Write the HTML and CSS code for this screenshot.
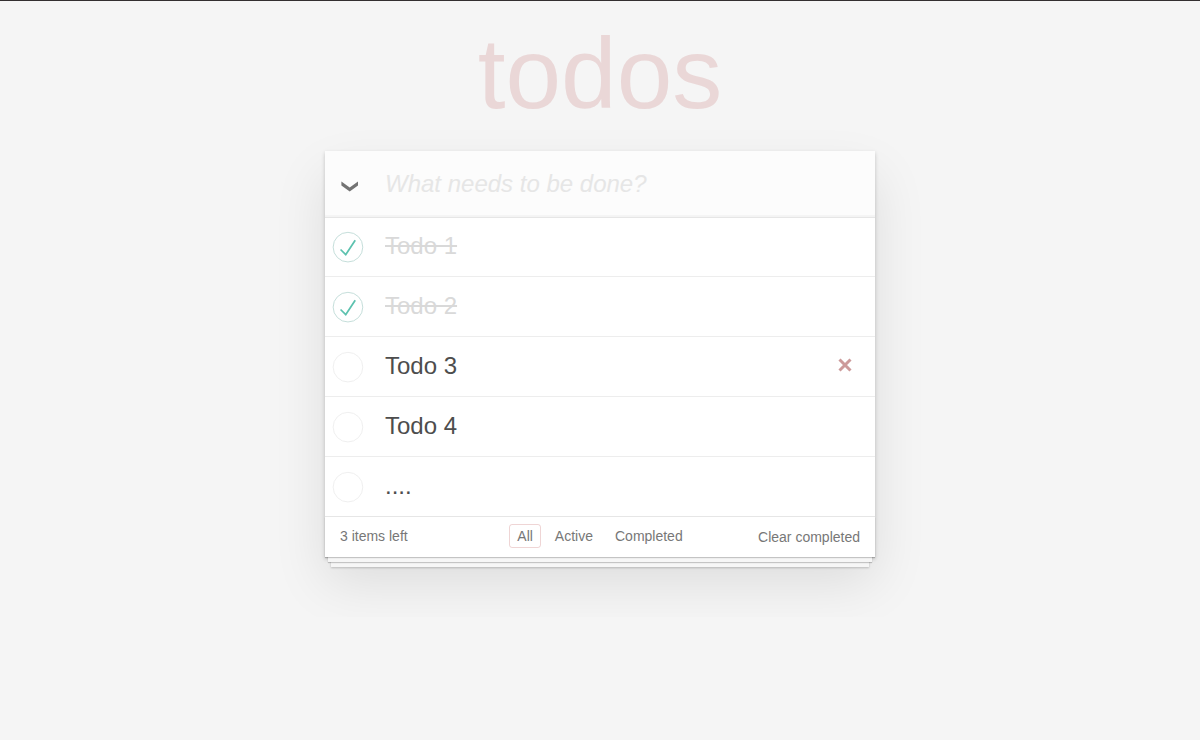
FILE: index.html
```html
<!DOCTYPE html>
<html lang="en">
<head>
<meta charset="utf-8">
<title>todos</title>
<link rel="stylesheet" href="styles.css">
</head>
<body>
<svg class="symbols" aria-hidden="true">
  <symbol id="ring" viewBox="-10 -18 100 135" overflow="visible">
    <circle cx="50" cy="50" r="50" fill="none" stroke="#ededed" stroke-width="3"/>
  </symbol>
  <symbol id="ring-done" viewBox="-10 -18 100 135" overflow="visible">
    <circle cx="50" cy="50" r="50" fill="none" stroke="#bddad5" stroke-width="3"/>
    <path fill="#5dc2af" d="M72 25L42 71 27 56l-4 4 20 20 34-52z"/>
  </symbol>
</svg>
<main class="todoapp">
  <h1 class="title">todos</h1>
  <section class="card">
    <header class="header">
      <button class="toggle-all" type="button" aria-label="Mark all as complete">
        <svg class="chevron" width="18" height="11" viewBox="0 0 18 11" aria-hidden="true"><path fill="#737373" d="M.4 .6 8.7 6.6 17 .6V4.4L8.7 10.6 .4 4.4z"/></svg>
      </button>
      <input class="new-todo" type="text" placeholder="What needs to be done?" aria-label="New todo">
    </header>
    <ul class="todo-list">
      <li class="todo done">
        <span class="check"><input class="toggle" type="checkbox" id="t1" checked><svg class="mark"><use href="#ring-done"/></svg></span>
        <label class="text" for="t1">Todo 1</label>
      </li>
      <li class="todo done">
        <span class="check"><input class="toggle" type="checkbox" id="t2" checked><svg class="mark"><use href="#ring-done"/></svg></span>
        <label class="text" for="t2">Todo 2</label>
      </li>
      <li class="todo">
        <span class="check"><input class="toggle" type="checkbox" id="t3"><svg class="mark"><use href="#ring"/></svg></span>
        <label class="text" for="t3">Todo 3</label>
        <button class="destroy" type="button" aria-label="Delete Todo 3">
          <svg class="cross" width="14" height="14" viewBox="0 0 14 14" aria-hidden="true"><path fill="none" stroke="#cc9a9a" stroke-width="3" d="M1.5 1.5 12.5 12.5M12.5 1.5 1.5 12.5"/></svg>
        </button>
      </li>
      <li class="todo">
        <span class="check"><input class="toggle" type="checkbox" id="t4"><svg class="mark"><use href="#ring"/></svg></span>
        <label class="text" for="t4">Todo 4</label>
      </li>
      <li class="todo">
        <span class="check"><input class="toggle" type="checkbox" id="t5"><svg class="mark"><use href="#ring"/></svg></span>
        <label class="text" for="t5">....</label>
      </li>
    </ul>
    <footer class="footer">
      <span class="count">3 items left</span>
      <nav class="filters">
        <a class="filter selected" href="#/">All</a>
        <a class="filter" href="#/active">Active</a>
        <a class="filter" href="#/completed">Completed</a>
      </nav>
      <button class="clear" type="button">Clear completed</button>
    </footer>
  </section>
</main>
</body>
</html>
```
FILE: styles.css
```css
* {
  box-sizing: border-box;
}

html {
  min-height: 100%;
  background: #f5f5f5;
  border-top: 1px solid #332f30;
}

body {
  margin: 0;
  font: 14px/20px "Liberation Sans", Arial, sans-serif;
  color: #4d4d4d;
}

button {
  padding: 0;
  border: 0;
  background: none;
  font: inherit;
  color: inherit;
  cursor: pointer;
}

.symbols {
  position: absolute;
  width: 0;
  height: 0;
}

.todoapp {
  max-width: 550px;
  margin: 0 auto;
  padding-bottom: 60px;
}

.title {
  margin: 0;
  padding: 16px 0 22px;
  font-size: 100px;
  line-height: 112px;
  font-weight: 400;
  text-align: center;
  color: rgba(175, 47, 47, 0.15);
}

.card {
  background: #fff;
  box-shadow: 0 2px 4px rgba(0, 0, 0, 0.2), 0 25px 50px rgba(0, 0, 0, 0.1);
}

.header {
  display: grid;
  grid-template-columns: 60px 1fr;
  height: 66px;
  background: #fcfcfc;
  box-shadow: inset 0 -2px 1px rgba(0, 0, 0, 0.03);
}

.toggle-all {
  display: flex;
  align-items: center;
  padding: 4px 0 0 16px;
}

.new-todo {
  width: 100%;
  border: 0;
  outline: 0;
  padding: 0;
  background: none;
  font-family: inherit;
  font-size: 24px;
  color: #4d4d4d;
}

.new-todo::placeholder {
  font-style: italic;
  color: #e6e6e6;
  opacity: 1;
}

.todo-list {
  margin: 0;
  padding: 0;
  list-style: none;
  box-shadow: inset 0 1px #e6e6e6;
}

.todo {
  display: grid;
  grid-template-columns: 60px 1fr 60px;
  align-items: center;
  border-bottom: 1px solid #ededed;
  font-size: 24px;
  line-height: 29px;
}

.todo:last-child {
  border-bottom-color: #e6e6e6;
}

.check {
  position: relative;
  width: 40px;
  height: 40px;
}

.toggle {
  appearance: none;
  display: block;
  width: 40px;
  height: 40px;
  margin: 0;
}

.mark {
  position: absolute;
  inset: 0;
  width: 40px;
  height: 40px;
  pointer-events: none;
}

.text {
  padding: 14px 0 16px;
}

.done .text {
  color: #d9d9d9;
  text-decoration: line-through;
}

.destroy {
  display: grid;
  place-items: center;
  height: 40px;
  padding-bottom: 4px;
}

.footer {
  position: relative;
  display: grid;
  grid-template-columns: 1fr auto 1fr;
  align-items: center;
  padding: 7px 15px 9px;
  color: #777;
}

.footer::before {
  content: "";
  position: absolute;
  inset: auto 0 0;
  height: 40px;
  pointer-events: none;
  box-shadow: 0 1px 1px rgba(0, 0, 0, 0.2), 0 8px 0 -3px #f6f6f6,
    0 9px 1px -3px rgba(0, 0, 0, 0.2), 0 16px 0 -6px #f6f6f6,
    0 17px 2px -6px rgba(0, 0, 0, 0.2);
}

.filters {
  display: flex;
  gap: 6px;
}

.filter {
  padding: 1px 7px;
  border: 1px solid transparent;
  border-radius: 3px;
  color: inherit;
  text-decoration: none;
}

.selected {
  border-color: rgba(175, 47, 47, 0.2);
}

.clear {
  justify-self: end;
  padding-top: 2px;
}
```
